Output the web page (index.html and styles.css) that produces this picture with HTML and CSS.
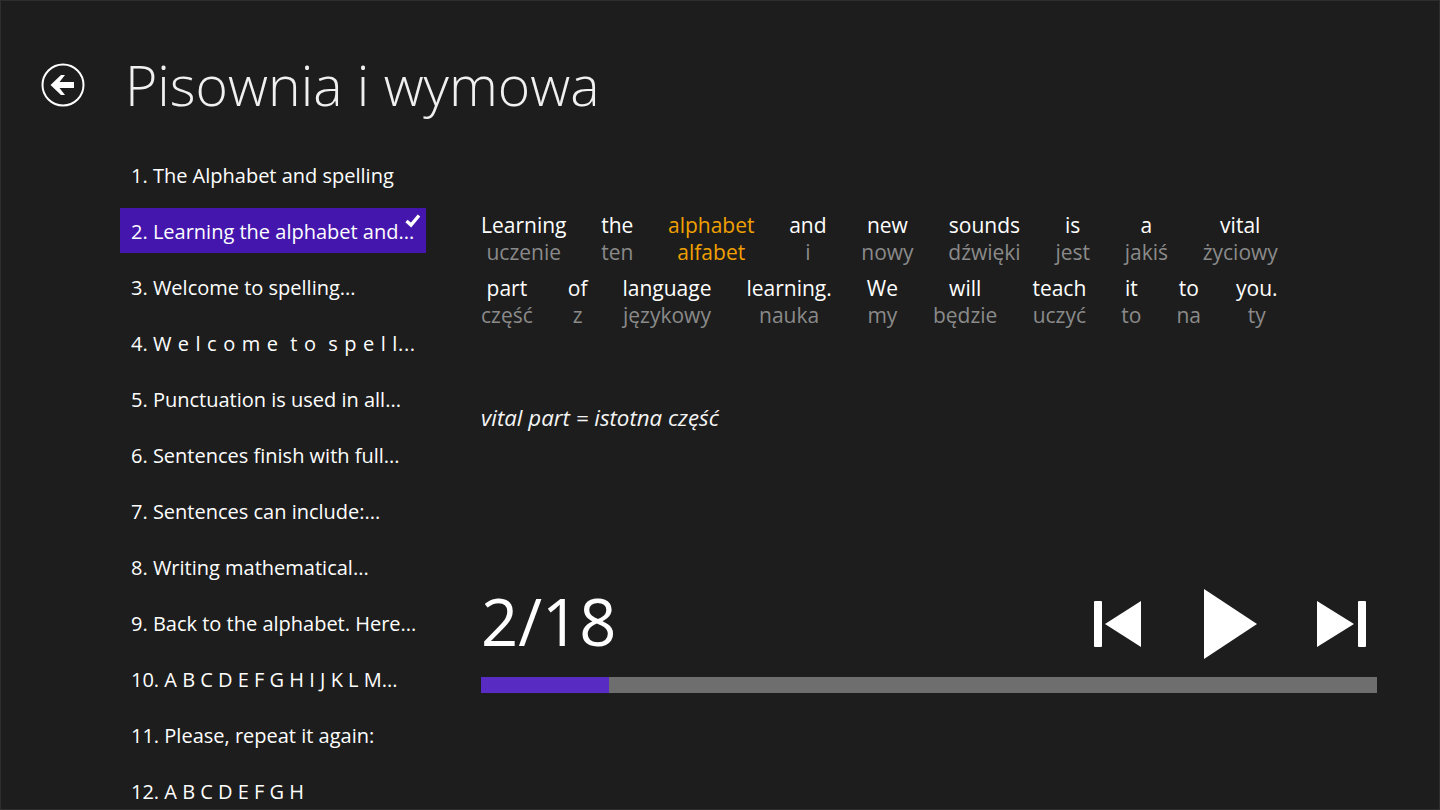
FILE: index.html
```html
<!DOCTYPE html>
<html lang="pl">
<head>
    <meta charset="UTF-8">
    <meta name="viewport" content="width=device-width, initial-scale=1.0">
    <title>Pisownia i wymowa</title>
    <link rel="stylesheet" href="styles.css">
</head>
<body>
    <header class="page-header">
        <button type="button" class="back-button" aria-label="Back">
            <svg width="46" height="46" viewBox="0 0 46 46">
                <circle cx="23" cy="23" r="20.5" fill="none" stroke="#fff" stroke-width="2"/>
                <path d="M10.5 23 L21 13 L25 13 L19.5 20 L34 20 L34 26 L19.5 26 L25 33 L21 33 Z" fill="#fff"/>
            </svg>
        </button>
        <h1>Pisownia i wymowa</h1>
    </header>

    <div class="lesson-layout">
        <ul class="sentence-list">
            <li>1. The Alphabet and spelling</li>
            <li class="active">2. Learning the alphabet and...
                <svg class="check" width="18" height="16" viewBox="0 0 18 16">
                    <path d="M2.5 9 L7 13 L15 3.5" fill="none" stroke="#fff" stroke-width="3.4"/>
                </svg>
            </li>
            <li>3. Welcome to spelling...</li>
            <li>4. <span class="spaced">W e l c o m e &nbsp;t o &nbsp;s p e l l...</span></li>
            <li>5. Punctuation is used in all...</li>
            <li>6. Sentences finish with full...</li>
            <li>7. Sentences can include:...</li>
            <li>8. Writing mathematical...</li>
            <li>9. Back to the alphabet. Here...</li>
            <li>10. A B C D E F G H I J K L M...</li>
            <li>11. Please, repeat it again:</li>
            <li>12. A B C D E F G H</li>
        </ul>

        <main class="lesson">
            <div class="word-row first">
                <div class="word"><span>Learning</span><span class="tr">uczenie</span></div>
                <div class="word"><span>the</span><span class="tr">ten</span></div>
                <div class="word hl"><span>alphabet</span><span class="tr">alfabet</span></div>
                <div class="word"><span>and</span><span class="tr">i</span></div>
                <div class="word"><span>new</span><span class="tr">nowy</span></div>
                <div class="word"><span>sounds</span><span class="tr">dźwięki</span></div>
                <div class="word"><span>is</span><span class="tr">jest</span></div>
                <div class="word"><span>a</span><span class="tr">jakiś</span></div>
                <div class="word"><span>vital</span><span class="tr">życiowy</span></div>
            </div>
            <div class="word-row">
                <div class="word"><span>part</span><span class="tr">część</span></div>
                <div class="word"><span>of</span><span class="tr">z</span></div>
                <div class="word"><span>language</span><span class="tr">językowy</span></div>
                <div class="word"><span>learning.</span><span class="tr">nauka</span></div>
                <div class="word"><span>We</span><span class="tr">my</span></div>
                <div class="word"><span>will</span><span class="tr">będzie</span></div>
                <div class="word"><span>teach</span><span class="tr">uczyć</span></div>
                <div class="word"><span>it</span><span class="tr">to</span></div>
                <div class="word"><span>to</span><span class="tr">na</span></div>
                <div class="word"><span>you.</span><span class="tr">ty</span></div>
            </div>

            <p class="note">vital part = istotna część</p>

            <div class="player">
                <div class="counter">2/18</div>
                <div class="controls">
                    <svg class="ctl-prev" width="48" height="48" viewBox="0 0 48 48" aria-label="Previous">
                        <rect x="0" y="1" width="8" height="46" rx="1" fill="#fff"/>
                        <path d="M11 24 L47 1 L47 47 Z" fill="#fff"/>
                    </svg>
                    <svg class="ctl-play" width="54" height="70" viewBox="0 0 54 70" aria-label="Play">
                        <path d="M0 0 L53 35 L0 70 Z" fill="#fff"/>
                    </svg>
                    <svg class="ctl-next" width="49" height="48" viewBox="0 0 49 48" aria-label="Next">
                        <path d="M0 1 L37 24 L0 47 Z" fill="#fff"/>
                        <rect x="41" y="1" width="8" height="46" rx="1" fill="#fff"/>
                    </svg>
                </div>
            </div>
            <div class="progress">
                <div class="progress-fill" style="width: 14.3%"></div>
            </div>
        </main>
    </div>
</body>
</html>
```

FILE: styles.css
```css
html, body {
    height: 100%;
}
body {
    margin: 0;
    height: 810px;
    overflow: hidden;
    box-sizing: border-box;
    border: 1px solid #2e2e2e;
    background-color: #1d1d1d;
    color: #fff;
    font-family: "Open Sans", "Noto Sans", sans-serif;
}
.page-header {
    display: flex;
    align-items: center;
    height: 168px;
    margin-bottom: -16px;
    padding: 0 0 0 38.5px;
    box-sizing: border-box;
}
.back-button {
    width: 46px;
    height: 46px;
    padding: 0;
    border: none;
    background: none;
}
.page-header h1 {
    margin: 0 0 0 39.5px;
    font-size: 55.3px;
    font-weight: 300;
    line-height: 70px;
    color: #f0f0f0;
}
.lesson-layout {
    display: flex;
    align-items: flex-start;
    padding-left: 119px;
}
.sentence-list {
    width: 306px;
    margin: -1px 0 0 0;
    padding: 0;
    list-style-type: none;
    flex-shrink: 0;
}
.sentence-list li {
    position: relative;
    height: 45px;
    line-height: 47px;
    margin-bottom: 11px;
    padding-left: 11px;
    font-size: 20px;
    white-space: nowrap;
}
.sentence-list li:last-child {
    margin-bottom: 0;
    height: 34px;
}
.sentence-list li.active {
    background-color: #4416ae;
}
.spaced {
    letter-spacing: 0.65px;
}
.check {
    position: absolute;
    top: 4px;
    right: 4px;
}
.lesson {
    width: 896px;
    margin-left: 55px;
    padding-top: 59px;
}
.word-row {
    display: flex;
    gap: 35px;
    margin-bottom: 9px;
    font-size: 21px;
    line-height: 27px;
}
.word-row.first {
    gap: 34.7px;
}
.word {
    display: flex;
    flex-direction: column;
    align-items: center;
}
.word .tr {
    color: #8a8a8a;
}
.word.hl span {
    color: #f0a000;
}
.note {
    margin: 75px 0 0 0;
    font-size: 22.3px;
    font-style: italic;
    line-height: 27px;
    color: #f4f4f4;
}
.player {
    display: flex;
    justify-content: space-between;
    align-items: center;
    margin-top: 150px;
    height: 80px;
}
.counter {
    font-size: 65px;
    font-weight: 400;
    line-height: 80px;
}
.controls {
    display: flex;
    align-items: center;
    gap: 59px;
    margin-top: 6px;
    padding-right: 11px;
}
.ctl-prev {
    margin-right: 3px;
}
.progress {
    height: 16px;
    margin-top: 16px;
    background-color: #6e6e6e;
}
.progress-fill {
    height: 100%;
    background-color: #582cc3;
}
```
